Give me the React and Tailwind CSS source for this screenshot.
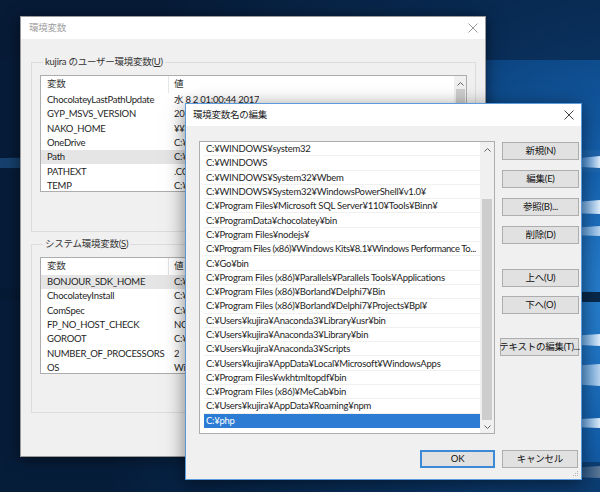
import React from "react";

const userVars = [
  ["ChocolateyLastPathUpdate", "水 8 2 01:00:44 2017"],
  ["GYP_MSVS_VERSION", "2015"],
  ["NAKO_HOME", "¥¥NAKO"],
  ["OneDrive", "C:¥Users¥kujira¥OneDrive"],
  ["Path", "C:¥Users¥kujira¥AppData"],
  ["PATHEXT", ".COM;.EXE;.BAT"],
  ["TEMP", "C:¥Users¥kujira¥AppData¥Local¥Temp"],
];

const systemVars = [
  ["BONJOUR_SDK_HOME", "C:¥Program Files¥Bonjour SDK¥"],
  ["ChocolateyInstall", "C:¥ProgramData¥chocolatey"],
  ["ComSpec", "C:¥WINDOWS¥system32¥cmd.exe"],
  ["FP_NO_HOST_CHECK", "NO"],
  ["GOROOT", "C:¥Go¥"],
  ["NUMBER_OF_PROCESSORS", "2"],
  ["OS", "Windows_NT"],
];

const paths = [
  "C:¥WINDOWS¥system32",
  "C:¥WINDOWS",
  "C:¥WINDOWS¥System32¥Wbem",
  "C:¥WINDOWS¥System32¥WindowsPowerShell¥v1.0¥",
  "C:¥Program Files¥Microsoft SQL Server¥110¥Tools¥Binn¥",
  "C:¥ProgramData¥chocolatey¥bin",
  "C:¥Program Files¥nodejs¥",
  "C:¥Program Files (x86)¥Windows Kits¥8.1¥Windows Performance To...",
  "C:¥Go¥bin",
  "C:¥Program Files (x86)¥Parallels¥Parallels Tools¥Applications",
  "C:¥Program Files (x86)¥Borland¥Delphi7¥Bin",
  "C:¥Program Files (x86)¥Borland¥Delphi7¥Projects¥Bpl¥",
  "C:¥Users¥kujira¥Anaconda3¥Library¥usr¥bin",
  "C:¥Users¥kujira¥Anaconda3¥Library¥bin",
  "C:¥Users¥kujira¥Anaconda3¥Scripts",
  "C:¥Users¥kujira¥AppData¥Local¥Microsoft¥WindowsApps",
  "C:¥Program Files¥wkhtmltopdf¥bin",
  "C:¥Program Files (x86)¥MeCab¥bin",
  "C:¥Users¥kujira¥AppData¥Roaming¥npm",
  "C:¥php",
];

function CloseIcon({ color = "#333" }) {
  return (
    <svg width="10" height="10" viewBox="0 0 10 10">
      <path d="M0.5 0.5 L9.5 9.5 M9.5 0.5 L0.5 9.5" stroke={color} strokeWidth="1" />
    </svg>
  );
}

function Chevron({ up }) {
  return (
    <svg width="7" height="4" viewBox="0 0 7 4">
      <path d={up ? "M0.5 3.5 L3.5 0.5 L6.5 3.5" : "M0.5 0.5 L3.5 3.5 L6.5 0.5"} stroke="#606060" strokeWidth="1" fill="none" />
    </svg>
  );
}

function Wallpaper() {
  return (
    <svg className="absolute inset-0" width="600" height="492" viewBox="0 0 600 492">
      <defs>
        <radialGradient id="bg" cx="640" cy="300" r="560" gradientUnits="userSpaceOnUse">
          <stop offset="0" stopColor="#2b86d6" />
          <stop offset="0.25" stopColor="#1460ad" />
          <stop offset="0.55" stopColor="#0b3f78" />
          <stop offset="1" stopColor="#071c38" />
        </radialGradient>
        <linearGradient id="beam" x1="1" y1="0" x2="0" y2="0">
          <stop offset="0" stopColor="#e8f4ff" stopOpacity="0.95" />
          <stop offset="0.5" stopColor="#7fbfff" stopOpacity="0.35" />
          <stop offset="1" stopColor="#3a8ad8" stopOpacity="0" />
        </linearGradient>
      </defs>
      <rect width="600" height="492" fill="url(#bg)" />
      <rect y="0" width="600" height="60" fill="#071b36" opacity="0.55" />
      <polygon points="0,158 600,150 600,172 0,168" fill="#2a6cb0" opacity="0.45" />
      <polygon points="560,160 600,156 600,168 560,166" fill="url(#beam)" />
      <polygon points="540,205 600,200 600,214 540,212" fill="url(#beam)" />
      <polygon points="540,230 600,226 600,236 540,234" fill="url(#beam)" opacity="0.8" />
      <polygon points="0,289 600,292 600,302 0,300" fill="#051a34" opacity="0.85" />
      <polygon points="540,338 600,334 600,346 540,343" fill="url(#beam)" />
      <polygon points="540,368 600,364 600,386 540,382" fill="url(#beam)" opacity="0.8" />
      <polygon points="540,421 600,418 600,428 540,426" fill="url(#beam)" />
      <polygon points="540,470 600,466 600,478 540,476" fill="url(#beam)" opacity="0.7" />
      <rect y="462" width="600" height="30" fill="#06203f" opacity="0.45" />
    </svg>
  );
}

function VarList({ rows, selected, thumb }) {
  return (
    <div className="w-[427px] h-[117px] bg-white border border-[#adadad] flex overflow-hidden">
      <div className="flex-1 min-w-0 flex flex-col">
        <div className="h-[17px] shrink-0 flex items-center text-[#333]">
          <div className="w-[128px] pl-[6px] border-r border-[#e5e5e5] h-full flex items-center">変数</div>
          <div className="pl-[5px]">値</div>
        </div>
        {rows.map(([name, value], i) => (
          <div
            key={name}
            className={`h-[14.3px] shrink-0 flex items-center whitespace-nowrap leading-[14px] ${i === selected ? "bg-[#e5e5e5]" : ""}`}
          >
            <div className="w-[128px] pl-[6px] shrink-0 overflow-hidden">{name}</div>
            <div className="pl-[5px] overflow-hidden">{value}</div>
          </div>
        ))}
      </div>
      <div className="w-[12px] shrink-0 bg-[#f0f0f0] flex flex-col items-center pt-[6px]">
        <Chevron up />
        {thumb && <div className="mt-[3px] w-[9px] flex-1 bg-[#cdcdcd]" />}
      </div>
    </div>
  );
}

function GroupBox({ label, mnemonic, children, className }) {
  return (
    <fieldset className={`border border-[#dcdcdc] pl-[8px] pr-[8px] ${className}`}>
      <legend className="ml-[3px] px-[2px] h-[14px] leading-[14px] text-[#333]">
        {label}(<span className="underline">{mnemonic}</span>)
      </legend>
      {children}
    </fieldset>
  );
}

function Button({ children, primary, className = "" }) {
  return (
    <div
      className={`h-[18px] flex items-center justify-center whitespace-nowrap bg-[#e1e1e1] text-[#111] ${
        primary ? "border-2 border-[#3c8ad6]" : "border border-[#adadad]"
      } ${className}`}
    >
      {children}
    </div>
  );
}

export default function App() {
  return (
    <div className="relative w-[600px] h-[492px] overflow-hidden text-[9.5px] tracking-[-0.25px] font-['Lato','Noto_Sans_CJK_JP',sans-serif] text-[#1e1e1e]">
      <Wallpaper />

      {/* 環境変数 (inactive, behind) */}
      <div className="absolute left-[20px] top-[16px] w-[466px] h-[441px] bg-[#f0f0f0] border border-[#9a9a9a] shadow-[0_2px_14px_rgba(0,0,0,0.55)] flex flex-col">
        <div className="h-[22px] shrink-0 bg-white flex items-center justify-between pl-[8px] pr-[7px] text-[#a0a0a0]">
          <span>環境変数</span>
          <CloseIcon color="#9a9a9a" />
        </div>
        <div className="flex flex-col pl-[10px] pr-[9px]">
          <GroupBox label="kujira のユーザー環境変数" mnemonic="U" className="mt-[16px] pt-[6px] pb-[39px]">
            <VarList rows={userVars} selected={4} thumb />
          </GroupBox>
          <GroupBox label="システム環境変数" mnemonic="S" className="mt-[5px] pt-[6px] pb-[38px]">
            <VarList rows={systemVars} selected={0} />
          </GroupBox>
        </div>
      </div>

      {/* 環境変数名の編集 (active) */}
      <div className="absolute left-[185px] top-[103px] w-[397px] h-[377px] bg-[#f0f0f0] border border-[#5b9bdc] shadow-[0_4px_18px_rgba(0,0,0,0.5)] flex flex-col">
        <div className="h-[22px] shrink-0 bg-white flex items-center justify-between pl-[7px] pr-[7px] text-[#222]">
          <span>環境変数名の編集</span>
          <CloseIcon color="#444" />
        </div>
        <div className="flex flex-col pl-[13px] pr-[2px] pt-[15px]">
          <div className="flex gap-[7px]">
            <div className="w-[296px] h-[293px] bg-white border border-[#adadad] flex">
              <div className="flex-1 min-w-0 flex flex-col pl-[4px] leading-[13px]">
                {paths.map((p, i) =>
                  i === paths.length - 1 ? (
                    <div key={p} className="h-[14.3px] shrink-0 flex items-center pl-[2px] bg-[#2c7cd3] text-white whitespace-nowrap">
                      {p}
                    </div>
                  ) : (
                    <div
                      key={p}
                      className={`h-[14.3px] shrink-0 flex items-center pl-[2px] border-b border-[#f0f0f0] whitespace-nowrap overflow-hidden ${
                        p.endsWith("...") ? "tracking-[-0.4px]" : ""
                      }`}
                    >
                      {p}
                    </div>
                  )
                )}
              </div>
              <div className="w-[14px] shrink-0 bg-[#f0f0f0] flex flex-col items-center">
                <div className="h-[15px] flex items-center">
                  <Chevron up />
                </div>
                <div className="mt-[42px] w-[10px] flex-1 bg-[#cdcdcd]" />
                <div className="h-[13px] flex items-center">
                  <Chevron />
                </div>
              </div>
            </div>
            <div className="w-[77px] flex flex-col">
              <Button className="mt-[1px]">新規(N)</Button>
              <Button className="mt-[10px]">編集(E)</Button>
              <Button className="mt-[10px]">参照(B)...</Button>
              <Button className="mt-[10px]">削除(D)</Button>
              <Button className="mt-[25px]">上へ(U)</Button>
              <Button className="mt-[9px]">下へ(O)</Button>
              <Button className="mt-[24px] -ml-[2px]">テキストの編集(T)...</Button>
            </div>
          </div>
          <div className="flex justify-end gap-[7px] mt-[16px] pr-[1px]">
            <Button primary className="w-[75px]">OK</Button>
            <Button className="w-[76px]">キャンセル</Button>
          </div>
        </div>
        <svg className="absolute right-[2px] bottom-[2px]" width="7" height="7" viewBox="0 0 7 7">
          <rect x="5" y="1" width="1" height="1" fill="#b5b5b5" />
          <rect x="3" y="3" width="1" height="1" fill="#b5b5b5" />
          <rect x="5" y="3" width="1" height="1" fill="#b5b5b5" />
          <rect x="1" y="5" width="1" height="1" fill="#b5b5b5" />
          <rect x="3" y="5" width="1" height="1" fill="#b5b5b5" />
          <rect x="5" y="5" width="1" height="1" fill="#b5b5b5" />
        </svg>
      </div>
    </div>
  );
}
